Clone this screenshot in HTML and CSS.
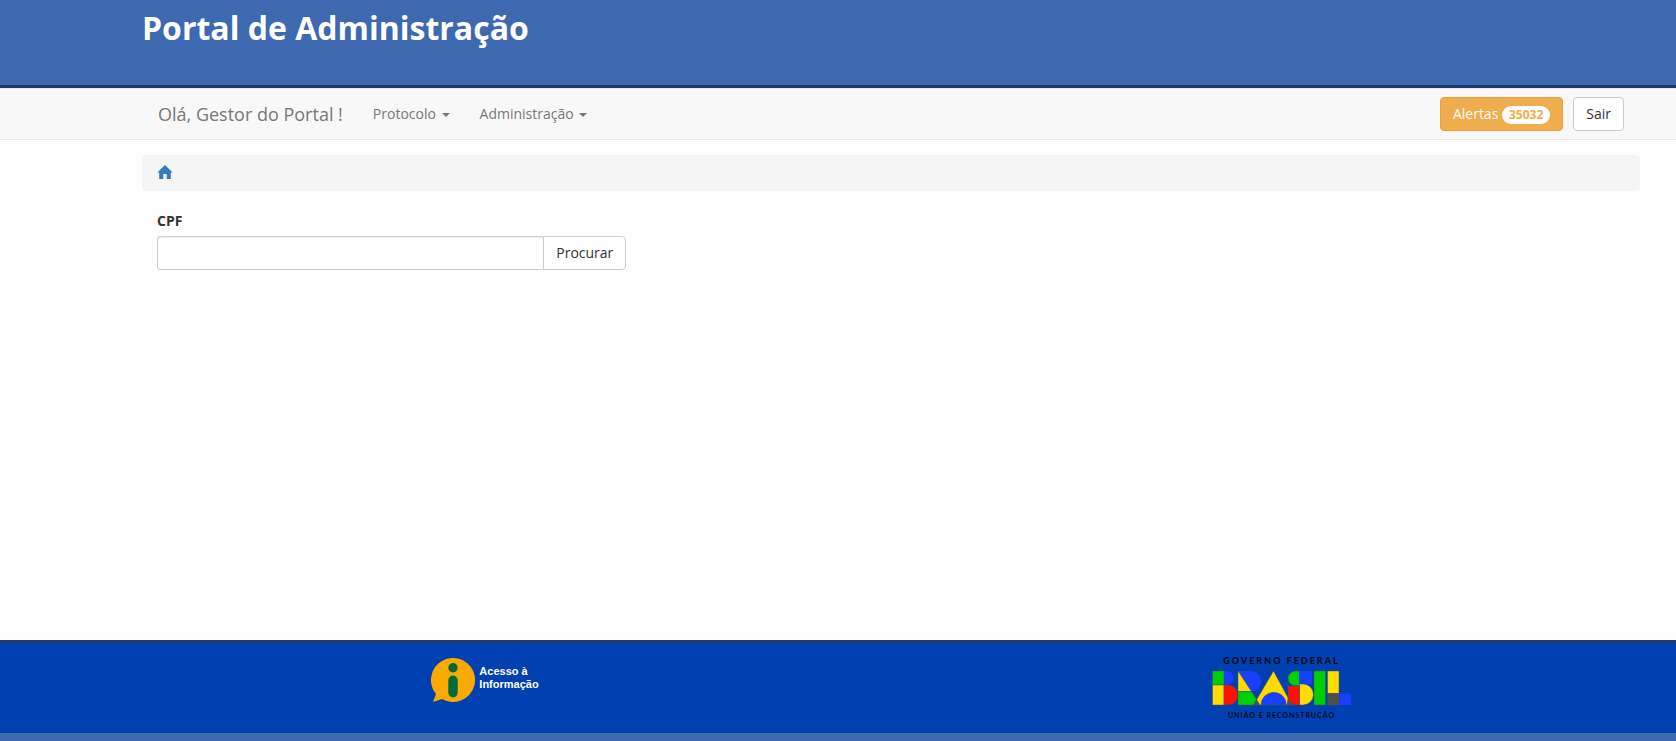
FILE: index.html
```html
<!DOCTYPE html>
<html lang="pt-BR">
<head>
<meta charset="utf-8">
<meta name="viewport" content="width=device-width, initial-scale=1">
<title>Portal de Administração</title>
<link rel="stylesheet" href="styles.css">
</head>
<body>
<header class="site-header container"><h1 class="site-title">Portal de Administração</h1></header>
<nav class="navbar container">
  <a class="brand" href="#">Olá, Gestor do Portal !</a>
  <ul class="menu">
    <li><a class="menu-link" href="#">Protocolo <span class="caret"></span></a></li>
    <li><a class="menu-link" href="#">Administração <span class="caret"></span></a></li>
  </ul>
  <div class="actions">
    <button type="button" class="btn btn-warning">Alertas <span class="badge">35032</span></button>
    <button type="button" class="btn">Sair</button>
  </div>
</nav>
<main class="container content">
  <div class="breadcrumb">
    <a class="home" href="#" aria-label="Início">
      <svg width="16" height="14" viewBox="0 0 16 14" fill="currentColor"><path d="M8 0 15.6 7.600H13.800V14H9.700V9H6.300V14H2.200V7.600H.4L8 0Z"/></svg>
    </a>
  </div>
  <form class="search">
    <label class="search-label" for="cpf">CPF</label>
    <div class="input-group">
      <input class="search-input" type="text" id="cpf">
      <button type="button" class="btn search-btn">Procurar</button>
    </div>
  </form>
</main>
<footer class="site-footer">
  <div class="footer-grid">
    <a class="info" href="#">
      <svg width="44" height="44" viewBox="0 0 44 44">
        <path fill="#f9a900" d="M22 0A22 22 0 1 1 11 41L2 44 5 36A22 22 0 0 1 22 0Z"/>
        <circle cx="22" cy="9.7" r="4.7" fill="#006b35"/>
        <rect x="17.3" y="17.5" width="9.4" height="22" rx="4.7" fill="#006b35"/>
      </svg>
      <span>Acesso à<br>Informação</span>
    </a>
    <a class="brasil" href="#">
      <span class="gov">GOVERNO FEDERAL</span>
      <svg width="140" height="36" viewBox="0 0 140 36">
        <g stroke="#385070" stroke-width=".5">
          <path fill="#00d000" d="M.5 1h11.5v14H.5z"/>
          <path fill="#ffdc00" d="M.5 15h11.5v20H.5z"/>
          <path fill="#183eff" stroke="none" d="M12 1h2.500a7 7 0 0 1 0 14H12z"/>
          <path fill="#ff1000" d="M12 15h4a10 10 0 0 1 0 20h-4z"/>
          <path fill="#183eff" stroke="none" d="M26 1h13a10.300 10.300 0 0 1 0 20.600H26z"/>
          <path fill="#ffdc00" d="M26 1v20.600h13.500z"/>
          <path fill="#00d000" d="M26 21.600h13.500L48 35H26z"/>
          <path fill="#ffdc00" d="M61.500 1 80 35H41.500z"/>
          <path fill="#505048" d="M44.500 29.500 48 35h-6.500z"/>
          <path fill="#183eff" d="M49 35a12.700 12.700 0 0 1 25.400 0z"/>
          <path fill="#00d000" d="M87.500 1h-4a7.400 7.400 0 0 0 0 14.800h4z"/>
          <path fill="#183eff" stroke="none" d="M87.500 1H100v13H87.500z"/>
          <path fill="#ffdc00" d="M87.500 14h3.500a10.500 10.500 0 0 1 0 21h-3.500z"/>
          <path fill="#ff1000" d="M76 16h11.500v19h-3.500c-4 0-8-4-8-8z"/>
          <path fill="#505048" d="M76 28.500q1.500 5 6 6.500h-7z"/>
          <path fill="#00d000" d="M102 1h11.500v34H102z"/>
          <path fill="#ffdc00" d="M115.500 1H127v22.500h-11.500z"/>
          <path fill="#505048" d="M115.500 23.500H127V35h-11.500z"/>
          <path fill="#183eff" stroke="none" d="M127.300 23.500H139V35h-11.700z"/>
        </g>
      </svg>
      <span class="motto">UNIÃO E RECONSTRUÇÃO</span>
    </a>
  </div>
</footer>
</body>
</html>
```
FILE: styles.css
```css
* { box-sizing: border-box; }
html { min-height: 100%; background: #3e68b0; }
body {
  display: flex;
  flex-direction: column;
  min-height: 100vh;
  margin: 0;
  padding-bottom: 8px;
  background: #3e68b0;
  color: #333;
  font: 14px/20px "Open Sans", sans-serif;
}
a { text-decoration: none; }
svg { display: block; }
.container { padding-right: 36px; padding-left: 142px; }
.site-header {
  min-height: 88px;
  padding-top: 8px;
  background: #3e68b0;
  border-bottom: 3px solid #20386c;
}
.site-title {
  margin: 0;
  color: #fff;
  font-size: 32px;
  line-height: 40px;
  font-weight: 700;
}
.navbar {
  display: flex;
  align-items: center;
  min-height: 52px;
  background: #f8f8f8;
  border: solid #e7e7e7;
  border-width: 1px 0;
}
.brand { padding: 0 15px 0 16px; color: #777; font-size: 18px; }
.menu { display: flex; margin: 0; padding: 0; list-style: none; }
.menu-link { display: block; padding: 15px; color: #777; }
.caret {
  display: inline-block;
  margin-left: 2px;
  vertical-align: middle;
  border-top: 4px solid #777;
  border-right: 4px solid transparent;
  border-left: 4px solid transparent;
}
.actions { display: flex; gap: 10px; margin-left: auto; padding-right: 16px; }
.btn {
  height: 34px;
  padding: 6px 12px;
  border: 1px solid #ccc;
  border-radius: 4px;
  background: #fff;
  color: #333;
  font: inherit;
}
.btn-warning { border-color: #eea236; background: #f0ad4e; color: #fff; }
.badge {
  display: inline-block;
  padding: 3px 7px;
  border-radius: 10px;
  background: #fff;
  color: #f0ad4e;
  font-size: 12px;
  line-height: 12px;
  font-weight: 700;
}
.content { flex: 1; padding-top: 15px; background: #fefefe; }
.breadcrumb {
  display: flex;
  align-items: center;
  height: 36px;
  padding: 0 15px;
  border-radius: 4px;
  background: #f5f5f5;
}
.home { padding-bottom: 2px; color: #337ab7; }
.search { width: calc(100% / 3); padding: 20px 15px; }
.search-label { display: inline-block; margin-bottom: 5px; font-weight: 700; }
.input-group { display: flex; }
.search-input {
  flex: 1;
  min-width: 0;
  height: 34px;
  padding: 6px 12px;
  border: 1px solid #ccc;
  border-right: 0;
  border-radius: 4px 0 0 4px;
  background: #fff;
  box-shadow: inset 0 1px 1px rgba(0, 0, 0, .075);
  font: inherit;
}
.search-btn { border-radius: 0 4px 4px 0; }
.site-footer {
  min-height: 93px;
  padding-top: 14px;
  border-top: 3px solid #20386c;
  background: #0040b0;
}
.footer-grid {
  display: grid;
  grid-template-columns: 1fr 1fr;
  justify-items: center;
  align-items: start;
  padding-left: 88px;
}
.info {
  display: flex;
  gap: 4px;
  padding-top: 1px;
  color: #fff;
  font: bold 11px/13px "Liberation Sans", Arial, sans-serif;
}
.info span { padding-top: 7px; }
.brasil {
  display: flex;
  flex-direction: column;
  align-items: center;
  padding-left: 5px;
  color: #000818;
  font-family: Lato, sans-serif;
}
.gov { font-size: 9px; line-height: 8px; font-weight: 900; letter-spacing: 2px; padding-bottom: 5px; }
.motto { font-size: 7px; line-height: 8px; font-weight: 700; letter-spacing: 1px; padding-top: 5px; }
```
